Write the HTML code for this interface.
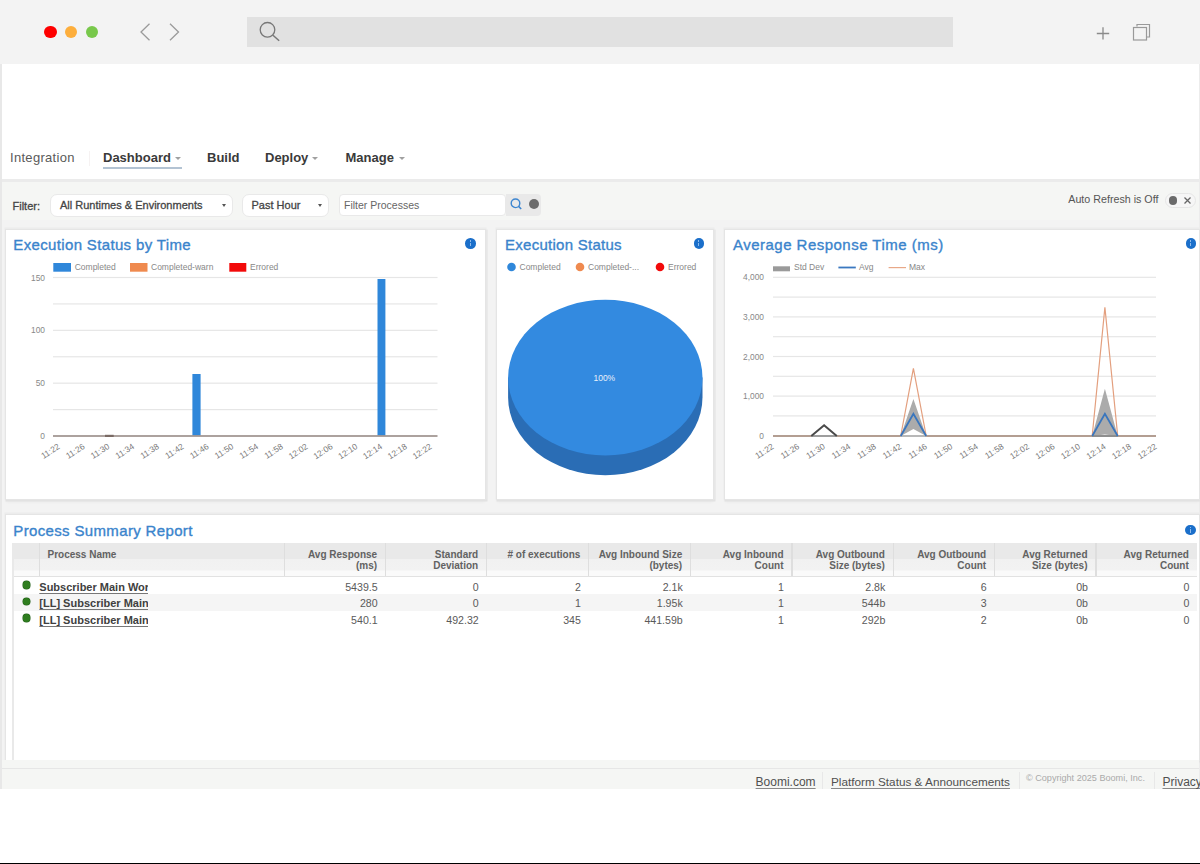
<!DOCTYPE html>
<html><head><meta charset="utf-8">
<style>
*{box-sizing:border-box;margin:0;padding:0}
html,body{width:1200px;height:864px;overflow:hidden;background:#fff;font-family:"Liberation Sans",sans-serif;position:relative}
.a{position:absolute;white-space:nowrap}
#chrome{left:0;top:0;width:1200px;height:64px;background:#f3f3f3}
.dot{position:absolute;width:12.4px;height:12.4px;border-radius:50%;top:25.8px}
.nav{position:absolute;top:150px;font-size:13px;line-height:16px;color:#3a3a3a;white-space:nowrap}
.nav b{font-weight:bold}
.caret{position:absolute;width:0;height:0;border-left:3.5px solid transparent;border-right:3.5px solid transparent;border-top:3.5px solid #a0a0a0}
.sel{position:absolute;top:193.7px;height:23.3px;background:#fff;border:1px solid #e9e9e9;border-radius:7px;font-size:11px;font-weight:normal;-webkit-text-stroke:.3px #444;line-height:21.5px;color:#444;padding-left:9px;white-space:nowrap}
.scaret{position:absolute;top:9px;width:0;height:0;border-left:2.5px solid transparent;border-right:2.5px solid transparent;border-top:3.5px solid #555}
.card{position:absolute;background:#fff;box-shadow:0 0 0 1px #e5e5e5, 0 -1px 0 1.5px #ececec, 1px 1px 0 1.5px #e2e2e2, 0 3.5px 3px 0 rgba(0,0,0,.035)}
.ttl{position:absolute;font-size:15px;line-height:18px;color:#3a84cc;white-space:nowrap;letter-spacing:.35px;-webkit-text-stroke:.35px #3a84cc}
.info{position:absolute;width:10.5px;height:10.5px;border-radius:50%;background:#1b6fca}
.info:after{content:"";position:absolute;left:4.6px;top:4.3px;width:1.3px;height:3.8px;background:#8dbbec}.info:before{content:"";position:absolute;left:4.55px;top:2.2px;width:1.4px;height:1.3px;background:#8dbbec}
.hd{position:absolute;top:543px;height:33px;font-size:10px;line-height:11.5px;font-weight:bold;color:#626262;text-align:right;padding-top:5px;padding-right:8px;border-left:1px solid #e3e3e3}
.cell{position:absolute;font-size:10.6px;line-height:16px;color:#444;text-align:right}
.lg{position:absolute;font-size:8.5px;line-height:10px;color:#777;white-space:nowrap}
</style></head><body>
<!-- browser chrome -->
<div id="chrome" class="a">
  <div class="dot" style="left:44.3px;background:#fe0000"></div>
  <div class="dot" style="left:64.7px;background:#fdae3c"></div>
  <div class="dot" style="left:85.7px;background:#78c84b"></div>
  <svg class="a" style="left:138px;top:22px" width="46" height="20" viewBox="0 0 46 20"><path d="M11.5 1.7 L3 10 L11.5 18.3" fill="none" stroke="#9a9a9a" stroke-width="1.3"/><path d="M32 1.7 L40.5 10 L32 18.3" fill="none" stroke="#9a9a9a" stroke-width="1.3"/></svg>
  <div class="a" style="left:247px;top:17px;width:706px;height:30px;background:#e1e1e1"></div>
  <svg class="a" style="left:257px;top:19px" width="26" height="26" viewBox="0 0 26 26"><circle cx="10.5" cy="10.8" r="7.3" fill="none" stroke="#777" stroke-width="1.3"/><path d="M16 16.2 L22.2 21.8" stroke="#777" stroke-width="1.5"/></svg>
  <svg class="a" style="left:1094px;top:24px" width="18" height="18" viewBox="0 0 18 18"><path d="M9 3.2v12.3M2.8 9.5h12.4" stroke="#8a8a8a" stroke-width="1.3"/></svg>
  <svg class="a" style="left:1130px;top:21px" width="24" height="22" viewBox="0 0 24 22"><path d="M7 5.5 V3.5 H19.5 V16 H16.5" fill="none" stroke="#999" stroke-width="1.2"/><rect x="3.5" y="6.5" width="13" height="12.5" fill="none" stroke="#999" stroke-width="1.2"/></svg>
</div>
<!-- app frame -->
<div class="a" style="left:0;top:64px;width:1.5px;height:725px;background:#e8e8e8"></div>
<div class="a" style="left:1198.5px;top:64px;width:1.5px;height:725px;background:#ececec"></div>

<!-- nav -->
<div class="nav" style="left:10px;color:#5a5a5a;letter-spacing:.3px">Integration</div>
<div class="a" style="left:88.5px;top:151px;width:1.5px;height:15px;background:#f6f2f2"></div>
<div class="nav" style="left:103px"><b>Dashboard</b></div>
<div class="caret" style="left:174.5px;top:157px"></div>
<div class="a" style="left:103px;top:167.4px;width:78.5px;height:1.5px;background:#b3c3d3"></div>
<div class="nav" style="left:207px"><b>Build</b></div>
<div class="nav" style="left:265px"><b>Deploy</b></div>
<div class="caret" style="left:311.5px;top:157px"></div>
<div class="nav" style="left:345.5px"><b>Manage</b></div>
<div class="caret" style="left:398.5px;top:157px"></div>

<!-- filter bar + content bg -->
<div class="a" style="left:1.5px;top:179px;width:1197px;height:3px;background:#ebebeb"></div>
<div class="a" style="left:1.5px;top:182px;width:1197px;height:38px;background:#f5f6f4"></div>
<div class="a" style="left:1.5px;top:220px;width:1197px;height:540px;background:#f3f3f3"></div>
<div class="a" style="left:12.5px;top:200px;font-size:11px;-webkit-text-stroke:.3px #444;line-height:13px;color:#444">Filter:</div>
<div class="sel" style="left:50px;width:183px">All Runtimes &amp; Environments<span class="scaret" style="left:171px"></span></div>
<div class="sel" style="left:241.5px;width:87px">Past Hour<span class="scaret" style="left:75px"></span></div>
<div class="sel" style="left:339px;width:167px;top:194px;height:22px;line-height:20px;border-radius:4px;color:#666;padding-left:4px;font-weight:normal;-webkit-text-stroke:0;font-size:10.5px">Filter Processes</div>
<div class="a" style="left:506px;top:194px;width:35px;height:21.5px;background:#e9e9e9;border-radius:0 4px 4px 0"></div>
<svg class="a" style="left:509px;top:197px" width="14" height="14" viewBox="0 0 14 14"><circle cx="6.5" cy="6.3" r="4.3" fill="none" stroke="#3d86d0" stroke-width="1.4"/><path d="M9.6 9.4 L12.2 12" stroke="#3d86d0" stroke-width="1.5"/></svg>
<div class="a" style="left:528.5px;top:199px;width:10px;height:10px;border-radius:50%;background:#6c6c6c"></div>
<div class="a" style="left:1068.3px;top:193.3px;font-size:10.7px;line-height:12px;color:#555">Auto Refresh is Off</div>
<div class="a" style="left:1164.5px;top:192.5px;width:31px;height:15px;border:1px solid #e6e6e6;border-radius:8px;background:#f6f6f6"></div>
<div class="a" style="left:1168.5px;top:196px;width:8.5px;height:8.5px;border-radius:50%;background:#6a6a6a"></div>
<svg class="a" style="left:1183px;top:196px" width="9" height="9" viewBox="0 0 9 9"><path d="M1.5 1.5 L7.5 7.5 M7.5 1.5 L1.5 7.5" stroke="#666" stroke-width="1.3"/></svg>

<!-- cards -->
<div class="card" style="left:6px;top:230px;width:479px;height:269px"></div>
<div class="card" style="left:497px;top:230px;width:216px;height:269px"></div>
<div class="card" style="left:725px;top:230px;width:474px;height:269px"></div>
<div class="card" style="left:6px;top:515px;width:1193px;height:245px"></div>

<div class="ttl" style="left:13.3px;top:236.4px">Execution Status by Time</div>
<div class="ttl" style="left:505px;top:236.4px;letter-spacing:.27px">Execution Status</div>
<div class="ttl" style="left:733px;top:236.4px;letter-spacing:.48px">Average Response Time (ms)</div>
<div class="ttl" style="left:13.3px;top:522.2px">Process Summary Report</div>
<div class="info" style="left:465.3px;top:238.3px"></div>
<div class="info" style="left:693.5px;top:238.3px"></div>
<div class="info" style="left:1185.5px;top:238.3px"></div>
<div class="info" style="left:1185.4px;top:524.5px"></div>

<!--CHARTS-->
<svg class="a" style="left:0;top:0" width="1200" height="864" viewBox="0 0 1200 864" font-family="Liberation Sans">
<rect x="53.3" y="263" width="17.7" height="8.7" fill="#2f87da"/>
<text x="74.7" y="270.3" font-size="8.5" fill="#888">Completed</text>
<rect x="130" y="263" width="17.5" height="8.7" fill="#ef8a4f"/>
<text x="151" y="270.3" font-size="8.5" fill="#888">Completed-warn</text>
<rect x="229.3" y="263" width="17" height="8.7" fill="#f20a0a"/>
<text x="250" y="270.3" font-size="8.5" fill="#888">Errored</text>
<rect x="53" y="276.90" width="384.5" height="1.2" fill="#e6e6e6"/>
<rect x="53" y="303.32" width="384.5" height="1.2" fill="#e6e6e6"/>
<rect x="53" y="329.74" width="384.5" height="1.2" fill="#e6e6e6"/>
<rect x="53" y="356.16" width="384.5" height="1.2" fill="#e6e6e6"/>
<rect x="53" y="382.58" width="384.5" height="1.2" fill="#e6e6e6"/>
<rect x="53" y="409.00" width="384.5" height="1.2" fill="#e6e6e6"/>
<text x="45" y="280.5" font-size="8.4" fill="#888" text-anchor="end">150</text>
<text x="45" y="333.3" font-size="8.4" fill="#888" text-anchor="end">100</text>
<text x="45" y="386.2" font-size="8.4" fill="#888" text-anchor="end">50</text>
<text x="45" y="439.0" font-size="8.4" fill="#888" text-anchor="end">0</text>
<rect x="192.4" y="374" width="8.2" height="62" fill="#2f87da"/>
<rect x="377.5" y="279" width="7.9" height="157" fill="#2f87da"/>
<rect x="53" y="435.1" width="384.5" height="1.8" fill="#a39894"/>
<rect x="105" y="434.8" width="8.7" height="2.2" fill="#7a6a64"/>
<text x="60.5" y="448" font-size="8.4" fill="#777" text-anchor="end" transform="rotate(-33 60.5 448)">11:22</text>
<text x="85.3" y="448" font-size="8.4" fill="#777" text-anchor="end" transform="rotate(-33 85.3 448)">11:26</text>
<text x="110.1" y="448" font-size="8.4" fill="#777" text-anchor="end" transform="rotate(-33 110.1 448)">11:30</text>
<text x="134.9" y="448" font-size="8.4" fill="#777" text-anchor="end" transform="rotate(-33 134.9 448)">11:34</text>
<text x="159.7" y="448" font-size="8.4" fill="#777" text-anchor="end" transform="rotate(-33 159.7 448)">11:38</text>
<text x="184.5" y="448" font-size="8.4" fill="#777" text-anchor="end" transform="rotate(-33 184.5 448)">11:42</text>
<text x="209.3" y="448" font-size="8.4" fill="#777" text-anchor="end" transform="rotate(-33 209.3 448)">11:46</text>
<text x="234.1" y="448" font-size="8.4" fill="#777" text-anchor="end" transform="rotate(-33 234.1 448)">11:50</text>
<text x="258.9" y="448" font-size="8.4" fill="#777" text-anchor="end" transform="rotate(-33 258.9 448)">11:54</text>
<text x="283.7" y="448" font-size="8.4" fill="#777" text-anchor="end" transform="rotate(-33 283.7 448)">11:58</text>
<text x="308.5" y="448" font-size="8.4" fill="#777" text-anchor="end" transform="rotate(-33 308.5 448)">12:02</text>
<text x="333.3" y="448" font-size="8.4" fill="#777" text-anchor="end" transform="rotate(-33 333.3 448)">12:06</text>
<text x="358.1" y="448" font-size="8.4" fill="#777" text-anchor="end" transform="rotate(-33 358.1 448)">12:10</text>
<text x="382.9" y="448" font-size="8.4" fill="#777" text-anchor="end" transform="rotate(-33 382.9 448)">12:14</text>
<text x="407.7" y="448" font-size="8.4" fill="#777" text-anchor="end" transform="rotate(-33 407.7 448)">12:18</text>
<text x="432.5" y="448" font-size="8.4" fill="#777" text-anchor="end" transform="rotate(-33 432.5 448)">12:22</text>
<path d="M508.09999999999997 377.6 L508.09999999999997 397.3 A97.2 77.9 0 0 0 702.5 397.3 L702.5 377.6 Z" fill="#2a6db5"/>
<ellipse cx="605.3" cy="377.6" rx="97.2" ry="77.9" fill="#338ae0"/>
<text x="604.3" y="380.6" font-size="8.5" fill="#e8f0fa" text-anchor="middle">100%</text>
<circle cx="511.5" cy="267" r="4.3" fill="#2f87da"/>
<text x="519.5" y="270.3" font-size="8.5" fill="#888">Completed</text>
<circle cx="580" cy="267" r="4.3" fill="#ef8a4f"/>
<text x="588" y="270.3" font-size="8.5" fill="#888">Completed-...</text>
<circle cx="660" cy="267" r="4.3" fill="#f20a0a"/>
<text x="668" y="270.3" font-size="8.5" fill="#888">Errored</text>
<rect x="773" y="266.3" width="17" height="5" fill="#9a9a9a"/>
<text x="794" y="270.3" font-size="8.5" fill="#888">Std Dev</text>
<rect x="838.4" y="266.6" width="17.4" height="1.8" fill="#3b78c0"/>
<text x="859" y="270.3" font-size="8.5" fill="#888">Avg</text>
<rect x="888.6" y="267" width="17.4" height="1.2" fill="#e8a888"/>
<text x="909" y="270.3" font-size="8.5" fill="#888">Max</text>
<rect x="773" y="276.70" width="383" height="1.2" fill="#e6e6e6"/>
<rect x="773" y="296.50" width="383" height="1.2" fill="#e6e6e6"/>
<rect x="773" y="316.30" width="383" height="1.2" fill="#e6e6e6"/>
<rect x="773" y="336.10" width="383" height="1.2" fill="#e6e6e6"/>
<rect x="773" y="355.90" width="383" height="1.2" fill="#e6e6e6"/>
<rect x="773" y="375.70" width="383" height="1.2" fill="#e6e6e6"/>
<rect x="773" y="395.50" width="383" height="1.2" fill="#e6e6e6"/>
<rect x="773" y="415.30" width="383" height="1.2" fill="#e6e6e6"/>
<text x="764" y="280.3" font-size="8.4" fill="#888" text-anchor="end">4,000</text>
<text x="764" y="319.9" font-size="8.4" fill="#888" text-anchor="end">3,000</text>
<text x="764" y="359.5" font-size="8.4" fill="#888" text-anchor="end">2,000</text>
<text x="764" y="399.1" font-size="8.4" fill="#888" text-anchor="end">1,000</text>
<text x="764" y="439.0" font-size="8.4" fill="#888" text-anchor="end">0</text>
<path d="M900.7 436 L913.4 398.9 L926.2 436 L913.4 429 Z" fill="#ababab"/>
<path d="M1092.2 436 L1104.9 388.8 L1117.7 436 L1104.9 434.5 Z" fill="#ababab"/>
<rect x="773" y="435.1" width="383" height="1.8" fill="#ab9487"/>
<rect x="811.3" y="435" width="25.5" height="2" fill="#9e9e9e"/>
<rect x="900.7" y="435" width="25.5" height="2" fill="#b8b8b8"/>
<rect x="1092.2" y="435" width="25.5" height="2" fill="#8e8e8e"/>
<path d="M811.3 436 L824.1 425.2 L836.8 436" fill="none" stroke="#4a4a4a" stroke-width="2" stroke-linejoin="miter"/>
<path d="M900.7 436 L913.4 368.4 L926.2 436 M1092.2 436 L1104.9 307.2 L1117.7 436" fill="none" stroke="#e39f7e" stroke-width="1.2"/>
<path d="M900.7 436 L913.4 413.9 L926.2 436 M1092.2 436 L1104.9 413.9 L1117.7 436" fill="none" stroke="#3a76bd" stroke-width="1.8"/>
<text x="774.5" y="448" font-size="8.4" fill="#777" text-anchor="end" transform="rotate(-33 774.5 448)">11:22</text>
<text x="800.0" y="448" font-size="8.4" fill="#777" text-anchor="end" transform="rotate(-33 800.0 448)">11:26</text>
<text x="825.6" y="448" font-size="8.4" fill="#777" text-anchor="end" transform="rotate(-33 825.6 448)">11:30</text>
<text x="851.1" y="448" font-size="8.4" fill="#777" text-anchor="end" transform="rotate(-33 851.1 448)">11:34</text>
<text x="876.6" y="448" font-size="8.4" fill="#777" text-anchor="end" transform="rotate(-33 876.6 448)">11:38</text>
<text x="902.1" y="448" font-size="8.4" fill="#777" text-anchor="end" transform="rotate(-33 902.1 448)">11:42</text>
<text x="927.7" y="448" font-size="8.4" fill="#777" text-anchor="end" transform="rotate(-33 927.7 448)">11:46</text>
<text x="953.2" y="448" font-size="8.4" fill="#777" text-anchor="end" transform="rotate(-33 953.2 448)">11:50</text>
<text x="978.7" y="448" font-size="8.4" fill="#777" text-anchor="end" transform="rotate(-33 978.7 448)">11:54</text>
<text x="1004.3" y="448" font-size="8.4" fill="#777" text-anchor="end" transform="rotate(-33 1004.3 448)">11:58</text>
<text x="1029.8" y="448" font-size="8.4" fill="#777" text-anchor="end" transform="rotate(-33 1029.8 448)">12:02</text>
<text x="1055.3" y="448" font-size="8.4" fill="#777" text-anchor="end" transform="rotate(-33 1055.3 448)">12:06</text>
<text x="1080.9" y="448" font-size="8.4" fill="#777" text-anchor="end" transform="rotate(-33 1080.9 448)">12:10</text>
<text x="1106.4" y="448" font-size="8.4" fill="#777" text-anchor="end" transform="rotate(-33 1106.4 448)">12:14</text>
<text x="1131.9" y="448" font-size="8.4" fill="#777" text-anchor="end" transform="rotate(-33 1131.9 448)">12:18</text>
<text x="1157.5" y="448" font-size="8.4" fill="#777" text-anchor="end" transform="rotate(-33 1157.5 448)">12:22</text>
</svg>
<!--/CHARTS-->
<!--CHART2-->
<!--CHART3-->
<!--TABLE-->
<div class="a" style="left:12.3px;top:542.5px;width:1184.7px;height:33.700000000000045px;background:linear-gradient(#e9e9e9 0,#e9e9e9 15.5px,#f1f1f1 16px,#f2f2f2 27px,#fafafa 28px)"></div>
<div class="a" style="left:12.3px;top:575.5px;width:1184.7px;height:1.4px;background:#e2e2e2"></div>
<div class="a" style="left:12.3px;top:542.5px;width:1.6px;height:217.0px;background:#e9e9e9"></div>
<div class="a" style="left:39.0px;top:542.5px;width:1.2px;height:33.700000000000045px;background:#dedede"></div>
<div class="a" style="left:283.8px;top:542.5px;width:1.2px;height:33.700000000000045px;background:#dedede"></div>
<div class="a" style="left:385.0px;top:542.5px;width:1.2px;height:33.700000000000045px;background:#dedede"></div>
<div class="a" style="left:486.1px;top:542.5px;width:1.2px;height:33.700000000000045px;background:#dedede"></div>
<div class="a" style="left:588.2px;top:542.5px;width:1.2px;height:33.700000000000045px;background:#dedede"></div>
<div class="a" style="left:690.1px;top:542.5px;width:1.2px;height:33.700000000000045px;background:#dedede"></div>
<div class="a" style="left:791.4px;top:542.5px;width:1.2px;height:33.700000000000045px;background:#dedede"></div>
<div class="a" style="left:892.7px;top:542.5px;width:1.2px;height:33.700000000000045px;background:#dedede"></div>
<div class="a" style="left:994.1px;top:542.5px;width:1.2px;height:33.700000000000045px;background:#dedede"></div>
<div class="a" style="left:1095.4px;top:542.5px;width:1.2px;height:33.700000000000045px;background:#dedede"></div>
<div class="a" style="left:47.5px;top:548.5px;font-size:10px;line-height:11.5px;font-weight:bold;color:#626262">Process Name</div>
<div class="a" style="right:822.9px;top:548.5px;font-size:10px;line-height:11.5px;font-weight:bold;color:#626262;text-align:right">Avg Response<br>(ms)</div>
<div class="a" style="right:721.8px;top:548.5px;font-size:10px;line-height:11.5px;font-weight:bold;color:#626262;text-align:right">Standard<br>Deviation</div>
<div class="a" style="right:619.7px;top:548.5px;font-size:10px;line-height:11.5px;font-weight:bold;color:#626262;text-align:right"># of executions</div>
<div class="a" style="right:517.8px;top:548.5px;font-size:10px;line-height:11.5px;font-weight:bold;color:#626262;text-align:right">Avg Inbound Size<br>(bytes)</div>
<div class="a" style="right:416.5px;top:548.5px;font-size:10px;line-height:11.5px;font-weight:bold;color:#626262;text-align:right">Avg Inbound<br>Count</div>
<div class="a" style="right:315.2px;top:548.5px;font-size:10px;line-height:11.5px;font-weight:bold;color:#626262;text-align:right">Avg Outbound<br>Size (bytes)</div>
<div class="a" style="right:213.8px;top:548.5px;font-size:10px;line-height:11.5px;font-weight:bold;color:#626262;text-align:right">Avg Outbound<br>Count</div>
<div class="a" style="right:112.5px;top:548.5px;font-size:10px;line-height:11.5px;font-weight:bold;color:#626262;text-align:right">Avg Returned<br>Size (bytes)</div>
<div class="a" style="right:11.2px;top:548.5px;font-size:10px;line-height:11.5px;font-weight:bold;color:#626262;text-align:right">Avg Returned<br>Count</div>
<div class="a" style="left:13.9px;top:593.8px;width:1183.1000000000001px;height:16.8px;background:#f5f5f5"></div>
<div class="a" style="left:22.6px;top:581.2px;width:7.6px;height:7.6px;border-radius:50%;background:#2f7d1f;box-shadow:0 0 0 .5px #24601a"></div>
<div class="a" style="left:39.3px;top:579.1px;width:108.7px;height:16px;overflow:hidden;font-size:11px;font-weight:bold;line-height:16px;color:#404040"><span style="text-decoration:underline;text-decoration-color:#777;text-decoration-thickness:1.2px;text-underline-offset:1.6px">Subscriber Main Workflow</span></div>
<div class="a" style="right:822.4px;top:579.6px;font-size:10.6px;line-height:15px;color:#5a5a5a">5439.5</div>
<div class="a" style="right:721.3px;top:579.6px;font-size:10.6px;line-height:15px;color:#5a5a5a">0</div>
<div class="a" style="right:619.2px;top:579.6px;font-size:10.6px;line-height:15px;color:#5a5a5a">2</div>
<div class="a" style="right:517.3px;top:579.6px;font-size:10.6px;line-height:15px;color:#5a5a5a">2.1k</div>
<div class="a" style="right:416.0px;top:579.6px;font-size:10.6px;line-height:15px;color:#5a5a5a">1</div>
<div class="a" style="right:314.7px;top:579.6px;font-size:10.6px;line-height:15px;color:#5a5a5a">2.8k</div>
<div class="a" style="right:213.3px;top:579.6px;font-size:10.6px;line-height:15px;color:#5a5a5a">6</div>
<div class="a" style="right:112.0px;top:579.6px;font-size:10.6px;line-height:15px;color:#5a5a5a">0b</div>
<div class="a" style="right:10.7px;top:579.6px;font-size:10.6px;line-height:15px;color:#5a5a5a">0</div>
<div class="a" style="left:22.6px;top:597.5px;width:7.6px;height:7.6px;border-radius:50%;background:#2f7d1f;box-shadow:0 0 0 .5px #24601a"></div>
<div class="a" style="left:39.3px;top:595.4px;width:108.7px;height:16px;overflow:hidden;font-size:11px;font-weight:bold;line-height:16px;color:#404040"><span style="text-decoration:underline;text-decoration-color:#777;text-decoration-thickness:1.2px;text-underline-offset:1.6px">[LL] Subscriber Main Workflow</span></div>
<div class="a" style="right:822.4px;top:595.9px;font-size:10.6px;line-height:15px;color:#5a5a5a">280</div>
<div class="a" style="right:721.3px;top:595.9px;font-size:10.6px;line-height:15px;color:#5a5a5a">0</div>
<div class="a" style="right:619.2px;top:595.9px;font-size:10.6px;line-height:15px;color:#5a5a5a">1</div>
<div class="a" style="right:517.3px;top:595.9px;font-size:10.6px;line-height:15px;color:#5a5a5a">1.95k</div>
<div class="a" style="right:416.0px;top:595.9px;font-size:10.6px;line-height:15px;color:#5a5a5a">1</div>
<div class="a" style="right:314.7px;top:595.9px;font-size:10.6px;line-height:15px;color:#5a5a5a">544b</div>
<div class="a" style="right:213.3px;top:595.9px;font-size:10.6px;line-height:15px;color:#5a5a5a">3</div>
<div class="a" style="right:112.0px;top:595.9px;font-size:10.6px;line-height:15px;color:#5a5a5a">0b</div>
<div class="a" style="right:10.7px;top:595.9px;font-size:10.6px;line-height:15px;color:#5a5a5a">0</div>
<div class="a" style="left:22.6px;top:614.1px;width:7.6px;height:7.6px;border-radius:50%;background:#2f7d1f;box-shadow:0 0 0 .5px #24601a"></div>
<div class="a" style="left:39.3px;top:612.0px;width:108.7px;height:16px;overflow:hidden;font-size:11px;font-weight:bold;line-height:16px;color:#404040"><span style="text-decoration:underline;text-decoration-color:#777;text-decoration-thickness:1.2px;text-underline-offset:1.6px">[LL] Subscriber Main Workflow</span></div>
<div class="a" style="right:822.4px;top:612.5px;font-size:10.6px;line-height:15px;color:#5a5a5a">540.1</div>
<div class="a" style="right:721.3px;top:612.5px;font-size:10.6px;line-height:15px;color:#5a5a5a">492.32</div>
<div class="a" style="right:619.2px;top:612.5px;font-size:10.6px;line-height:15px;color:#5a5a5a">345</div>
<div class="a" style="right:517.3px;top:612.5px;font-size:10.6px;line-height:15px;color:#5a5a5a">441.59b</div>
<div class="a" style="right:416.0px;top:612.5px;font-size:10.6px;line-height:15px;color:#5a5a5a">1</div>
<div class="a" style="right:314.7px;top:612.5px;font-size:10.6px;line-height:15px;color:#5a5a5a">292b</div>
<div class="a" style="right:213.3px;top:612.5px;font-size:10.6px;line-height:15px;color:#5a5a5a">2</div>
<div class="a" style="right:112.0px;top:612.5px;font-size:10.6px;line-height:15px;color:#5a5a5a">0b</div>
<div class="a" style="right:10.7px;top:612.5px;font-size:10.6px;line-height:15px;color:#5a5a5a">0</div>
<!--/TABLE-->

<!-- footer -->
<div class="a" style="left:1.5px;top:760px;width:1197px;height:29px;background:#f5f6f4"></div>
<div class="a" style="left:1.5px;top:767.5px;width:1197px;height:1.3px;background:#e6e6e6"></div>
<div class="a" style="left:755.6px;top:775px;font-size:12px;line-height:14px;color:#505050;text-decoration:underline;text-decoration-color:#888;text-underline-offset:1.5px;text-decoration-thickness:1.2px">Boomi.com</div>
<div class="a" style="left:822px;top:772px;width:1.2px;height:17px;background:#e8e8e8"></div>
<div class="a" style="left:831px;top:775px;font-size:11.75px;line-height:14px;color:#505050;text-decoration:underline;text-decoration-color:#888;text-underline-offset:1.5px;text-decoration-thickness:1.2px">Platform Status &amp; Announcements</div>
<div class="a" style="left:1019px;top:772px;width:1.2px;height:17px;background:#e8e8e8"></div>
<div class="a" style="left:1026px;top:773px;font-size:9.1px;line-height:11px;color:#aaa">© Copyright 2025 Boomi, Inc.</div>
<div class="a" style="left:1154px;top:772px;width:1.2px;height:17px;background:#e8e8e8"></div>
<div class="a" style="left:1162.5px;top:775px;font-size:12px;line-height:14px;color:#505050;text-decoration:underline;text-decoration-color:#888;text-underline-offset:1.5px;text-decoration-thickness:1.2px">Privacy</div>
<div class="a" style="left:0;top:862.5px;width:1200px;height:1.5px;background:#000"></div>
</body></html>
